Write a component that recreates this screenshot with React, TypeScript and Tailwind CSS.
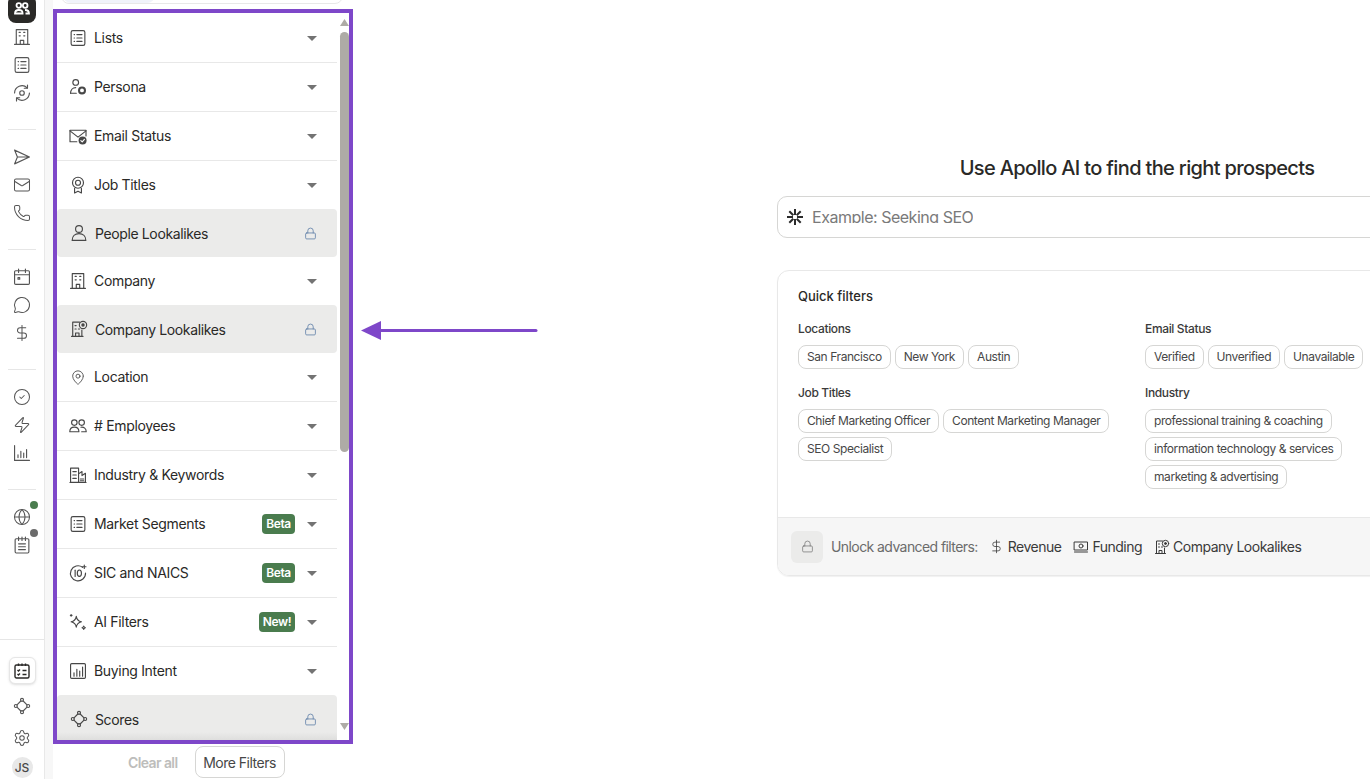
import { ReactNode } from "react";
import {
  CircleCheck,
  DollarSign,
  Globe,
  Lock,
  Mail,
  MapPin,
  MessageCircle,
  Phone,
  Settings,
  Zap,
} from "lucide-react";

function Ico({ size = 16, children }: { size?: number; children: ReactNode }) {
  return (
    <svg
      width={size}
      height={size}
      viewBox="1 1 14 14"
      fill="none"
      stroke="currentColor"
      strokeWidth="1"
      strokeLinecap="round"
      strokeLinejoin="round"
      className="shrink-0 overflow-visible"
    >
      {children}
    </svg>
  );
}

const ListIcon = ({ size = 16 }) => (
  <Ico size={size}>
    <rect x="2" y="1.5" width="12" height="13" rx="1.5" />
    <path d="M4.600 5h.4M4.600 8h.4M4.600 11h.4M7 5h4.500M7 8h4.500M7 11h4.500" />
  </Ico>
);
const BuildingIcon = ({ size = 16 }) => (
  <Ico size={size}>
    <path d="M3 14.500V1.500h10v13M1.500 14.500h13" />
    <path d="M6.500 14.500v-3.500h3v3.500M5.500 4h1M9.500 4h1M5.500 7h1M9.500 7h1" />
  </Ico>
);
const PersonaIcon = () => (
  <Ico>
    <circle cx="6" cy="4" r="2.500" />
    <path d="M1.500 13.500c0-3 2-5 4.500-5" />
    <path d="M1.500 13.500h5" />
    <circle cx="11.500" cy="11" r="2.600" strokeWidth="1.800" />
  </Ico>
);
const MailCheckIcon = () => (
  <Ico>
    <path d="M7 13H1V3h14v5" />
    <path d="M1 3.500l7 5.500 7-5.500" />
    <circle cx="12" cy="12" r="3.500" fill="currentColor" stroke="none" />
    <path d="M10.500 12l1.200 1.100 1.900-2.100" stroke="#fff" />
  </Ico>
);
const AwardIcon = () => (
  <Ico>
    <circle cx="8" cy="6" r="4.800" />
    <circle cx="8" cy="6" r="2.200" />
    <path d="M5 11v4l3-1.600 3 1.600v-4" />
  </Ico>
);
const PersonIcon = () => (
  <Ico>
    <circle cx="8" cy="4.500" r="3" />
    <path d="M2 14.500c0-3.800 2.500-6 6-6s6 2.200 6 6z" />
  </Ico>
);
const CompanyLookIcon = ({ size = 16 }) => (
  <Ico size={size}>
    <path d="M2.500 14.500V2h6M1.500 14.500h10M10.500 14.500V9" />
    <path d="M5 14.500V11.500h3v3M4.500 5h1M4.500 8h1M7.500 8h1" />
    <circle cx="11.500" cy="4.500" r="3.200" />
    <circle cx="11.500" cy="4.500" r="1" fill="currentColor" />
  </Ico>
);
const UsersIcon = ({ size = 16 }) => (
  <Ico size={size}>
    <circle cx="4.800" cy="5" r="2.400" />
    <circle cx="11.200" cy="5" r="2.400" />
    <path d="M.8 13c0-2.600 1.600-4 4-4s4 1.400 4 4zM10.500 9.100c2.800-.4 4.700 1.200 4.700 3.900h-4" />
  </Ico>
);
const IndustryIcon = () => (
  <Ico>
    <path d="M1.500 14.500V2h7v12.500M1 14.500h14M8.500 7l3-2v3.500l3-2V14.500" />
    <path d="M3.500 5h3M3.500 8h3M3.500 11h3M10 11.500h3M10 13h3" />
  </Ico>
);
const SicIcon = () => (
  <Ico>
    <path d="M12 3A6.600 6.600 0 1 0 14.600 8" />
    <path d="M5.500 5.500v5.500" />
    <ellipse cx="9.200" cy="8.200" rx="1.800" ry="2.800" />
    <path d="M13.500 1v3M12 2.500h3" />
  </Ico>
);
const SparkIcon = () => (
  <Ico>
    <path d="M6.500 3C7 6 8 7.200 11 7.800 8 8.500 7 9.500 6.500 12.500 6 9.500 5 8.500 2 7.800 5 7.200 6 6 6.500 3z" />
    <path d="M13 11.500c.2 1 .6 1.300 1.500 1.500-.9.200-1.300.6-1.500 1.500-.2-.9-.6-1.300-1.500-1.500.9-.2 1.300-.5 1.500-1.500z" />
    <path d="M2 1.500v1.500M1.300 2.200h1.500" />
  </Ico>
);
const BarsBoxIcon = () => (
  <Ico>
    <rect x="1.500" y="1.500" width="13" height="13" rx="1" />
    <path d="M4.500 12.500V9.500M7 12.500V6.500M9.500 12.500V8M12 12.500V4.500" />
  </Ico>
);
const ScoresIcon = ({ size = 16 }) => (
  <Ico size={size}>
    <circle cx="8" cy="2.600" r="1.300" />
    <circle cx="13.400" cy="8" r="1.300" />
    <circle cx="8" cy="13.400" r="1.300" />
    <circle cx="2.600" cy="8" r="1.300" />
    <path d="M9 3.600l3.400 3.400M12.400 9L9 12.400M7 12.400L3.600 9M3.600 7L7 3.600" />
  </Ico>
);
const SyncIcon = () => (
  <Ico>
    <path d="M1.500 8a6.500 6.500 0 0 1 11-4.500M14.500 8a6.500 6.500 0 0 1-11 4.500" />
    <path d="M12.800 1v2.800H10M3.200 15v-2.800H6" />
    <circle cx="8" cy="8" r="2" />
  </Ico>
);
const SendIcon = () => (
  <Ico>
    <path d="M1.500 2l13 6-13 6 2.500-6zM4 8h10.500" />
  </Ico>
);
const CalendarIcon = () => (
  <Ico>
    <rect x="1.500" y="2.500" width="13" height="12" rx="1" />
    <path d="M1.500 6h13M5 1v3M11 1v3" />
    <rect x="4.500" y="8.500" width="1.500" height="1.500" />
  </Ico>
);
const ChartIcon = () => (
  <Ico>
    <path d="M1.500 1.500v13h13" />
    <path d="M4.500 12V9.500M7 12V6.500M9.500 12V8M12 12V5" />
  </Ico>
);
const NotesIcon = () => (
  <Ico>
    <rect x="2" y="2.500" width="12" height="12.500" rx="1" />
    <path d="M5 1v3M8 1v3M11 1v3M5 7h6M5 9.500h6M5 12h6" />
  </Ico>
);
const ActiveUsersIcon = () => (
  <svg width="16" height="16" viewBox="0 0 16 16" fill="none" stroke="#fff" strokeWidth="1.800">
    <circle cx="4.800" cy="4.500" r="2.300" />
    <circle cx="11.200" cy="4.500" r="2.300" />
    <path d="M1 12.500c0-2.600 1.400-3.500 3.800-3.500s3.800.9 3.800 3.500zM11 9c2.600 0 4 1 4 3.500h-3.500" />
  </svg>
);
const ApolloMark = () => (
  <svg width="18" height="18" viewBox="0 0 18 18" fill="none" stroke="#2b2b2b" strokeWidth="2">
    <path d="M9 1v6M9 11v6M1 9h6M11 9h6M3.300 3.300l4 4M10.700 10.700l4 4M14.700 3.300l-4 4M7.300 10.700l-4 4" />
  </svg>
);

function RailButton({ children }: { children: ReactNode }) {
  return (
    <div className="flex h-7 w-7 items-center justify-center text-[#555555]">
      {children}
    </div>
  );
}

const lucideProps = { size: 18, strokeWidth: 1.35 };

function RailGroup({ children }: { children: ReactNode }) {
  return (
    <div className="flex flex-col items-center border-b border-[#e6e6e6] pt-[13px] pb-[22px] mx-2">
      {children}
    </div>
  );
}

function Rail() {
  return (
    <div className="flex h-[779px] w-[45px] shrink-0 flex-col border-r border-[#e8e8e8] bg-white">
      <div className="flex flex-col items-center mx-2 border-b border-[#e6e6e6] pb-[22px] -mt-[5px]">
        <div className="flex h-7 w-7 items-center justify-center rounded-lg bg-[#2a2927]">
          <ActiveUsersIcon />
        </div>
        <RailButton><BuildingIcon /></RailButton>
        <RailButton><ListIcon /></RailButton>
        <RailButton><SyncIcon /></RailButton>
      </div>
      <RailGroup>
        <RailButton><SendIcon /></RailButton>
        <RailButton><Mail {...lucideProps} /></RailButton>
        <RailButton><Phone {...lucideProps} /></RailButton>
      </RailGroup>
      <RailGroup>
        <RailButton><CalendarIcon /></RailButton>
        <RailButton><MessageCircle {...lucideProps} /></RailButton>
        <RailButton><DollarSign {...lucideProps} /></RailButton>
      </RailGroup>
      <RailGroup>
        <RailButton><CircleCheck {...lucideProps} /></RailButton>
        <RailButton><Zap {...lucideProps} /></RailButton>
        <RailButton><ChartIcon /></RailButton>
      </RailGroup>
      <div className="flex flex-col items-center pt-[13px]">
        <div className="relative">
          <RailButton><Globe {...lucideProps} /></RailButton>
          <span className="absolute -top-[2px] right-[-2px] h-2 w-2 rounded-full bg-[#4a7c4e]" />
        </div>
        <div className="relative">
          <RailButton><NotesIcon /></RailButton>
          <span className="absolute -top-[2px] right-[-2px] h-2 w-2 rounded-full bg-[#6b6b6b]" />
        </div>
      </div>
      <div className="mt-auto flex flex-col items-center border-t border-[#e6e6e6] pt-[17px]">
        <div className="flex h-[27px] w-[27px] items-center justify-center rounded-md border border-[#e6e6e6] bg-white text-[#2a2927] shadow-sm">
          <svg width="16" height="16" viewBox="0 0 16 16" fill="none" stroke="currentColor" strokeWidth="1.400">
            <rect x="1" y="2" width="14" height="13" rx="1.500" />
            <path d="M4.500 .5v2.500M8 .5v2.500M11.500 .5v2.500M3.500 7l1 1 1.500-1.500M3.500 11l1 1 1.500-1.500M8.500 7.500h4M8.500 11.500h4" />
          </svg>
        </div>
        <div className="mt-2"><RailButton><ScoresIcon /></RailButton></div>
        <div className="mt-1"><RailButton><Settings {...lucideProps} /></RailButton></div>
        <div className="mt-[5px] mb-px flex h-[21px] w-[21px] items-center justify-center rounded-full bg-[#e8e8e8] text-[12px] font-medium tracking-normal text-[#474747]">
          JS
        </div>
      </div>
    </div>
  );
}

type RowData = {
  label: string;
  icon: ReactNode;
  locked?: boolean;
  badge?: string;
  noBorder?: boolean;
};

const rows: RowData[] = [
  { label: "Lists", icon: <ListIcon /> },
  { label: "Persona", icon: <PersonaIcon /> },
  { label: "Email Status", icon: <MailCheckIcon /> },
  { label: "Job Titles", icon: <AwardIcon />, noBorder: true },
  { label: "People Lookalikes", icon: <PersonIcon />, locked: true },
  { label: "Company", icon: <BuildingIcon />, noBorder: true },
  { label: "Company Lookalikes", icon: <CompanyLookIcon />, locked: true },
  { label: "Location", icon: <MapPin size={17} strokeWidth={1.3} /> },
  { label: "# Employees", icon: <UsersIcon /> },
  { label: "Industry & Keywords", icon: <IndustryIcon /> },
  { label: "Market Segments", icon: <ListIcon />, badge: "Beta" },
  { label: "SIC and NAICS", icon: <SicIcon />, badge: "Beta" },
  { label: "AI Filters", icon: <SparkIcon />, badge: "New!" },
  { label: "Buying Intent", icon: <BarsBoxIcon />, noBorder: true },
  { label: "Scores", icon: <ScoresIcon />, locked: true },
];

function FilterRow({ row }: { row: RowData }) {
  if (row.locked) {
    return (
      <div className="flex h-12 shrink-0 items-center rounded bg-[#ebebea] pl-[14px] pr-5 text-[#474747]">
        <span className="flex w-4 shrink-0 justify-center">{row.icon}</span>
        <span className="ml-2 pt-px text-[14px] tracking-[-0.38px] text-[#2a2927]">{row.label}</span>
        <Lock size={13} strokeWidth={1.5} className="ml-auto text-[#5f7fa8]" />
      </div>
    );
  }
  return (
    <div
      className={`flex h-12 box-content shrink-0 items-center pl-[13px] pr-5 text-[#474747] ${
        row.noBorder ? "" : "border-b border-[#e8e8e8]"
      }`}
    >
      <span className="flex w-4 shrink-0 justify-center">{row.icon}</span>
      <span className="ml-2 pb-px text-[14px] tracking-[-0.33px] text-[#2a2927]">{row.label}</span>
      {row.badge && (
        <span
          className={`ml-auto mr-3 flex h-5 items-center justify-center rounded-sm bg-[#4a7c4e] text-[12px] font-semibold text-white ${
            row.badge === "Beta" ? "w-[33px]" : "w-9"
          }`}
        >
          {row.badge}
        </span>
      )}
      <svg width="10" height="5" viewBox="0 0 10 5" className={row.badge ? "" : "ml-auto"}>
        <path d="M0 0h10L5 5z" fill="#737373" />
      </svg>
    </div>
  );
}

function FilterPanel() {
  return (
    <div className="flex h-[779px] w-[300px] shrink-0 flex-col bg-white">
      <div className="h-[9px] overflow-hidden">
        <div className="ml-2 -mt-6 h-[28px] w-[282px] rounded-lg border border-[#e8e8e8]">
          <div className="ml-px h-full w-[92px] rounded-lg bg-[#f0f3fa]" />
        </div>
      </div>
      <div className="relative flex h-[735px] shrink-0 overflow-hidden border-4 border-[#7e47c9]">
        <div className="flex w-[280px] shrink-0 flex-col pt-px">
          {rows.map((row) => (
            <FilterRow key={row.label} row={row} />
          ))}
        </div>
        <div className="absolute bottom-0 left-0 h-2 w-[280px] bg-gradient-to-b from-transparent to-[#d9d9d8]/70" />
        <div className="ml-[3px] flex w-[9px] shrink-0 flex-col items-center pt-[6px]">
          <svg width="9" height="7" viewBox="0 0 9 7"><path d="M4.500 0L9 7H0z" fill="#aeaba6" /></svg>
          <div className="mt-[6px] h-[420px] w-[9px] shrink-0 rounded-full bg-[#aeaba6]" />
          <svg width="9" height="7" viewBox="0 0 9 7" className="mt-auto mb-[10px]"><path d="M0 0h9L4.500 7z" fill="#aeaba6" /></svg>
        </div>
      </div>
      <div className="flex flex-1 items-center gap-[17px] pl-[75px] pt-[1px]">
        <span className="text-[14px] font-semibold tracking-[-0.6px] text-[#bdbdbb]">Clear all</span>
        <button className="h-[32px] w-[90px] rounded-lg border border-[#d6d6d4] text-[14px] tracking-[-0.5px] text-[#474747]">
          More Filters
        </button>
      </div>
    </div>
  );
}

function Chip({ children }: { children: ReactNode }) {
  return (
    <span className="flex h-6 items-center rounded-lg border border-[#d6d6d4] px-2 text-[12px] tracking-[-0.42px] text-[#474747]">
      {children}
    </span>
  );
}

function ChipGroup({ title, chips }: { title: string; chips: string[] }) {
  return (
    <div className="w-[327px]">
      <div className="text-[12px] leading-4 font-medium tracking-[-0.36px] text-[#3a3a3a]">{title}</div>
      <div className="mt-[8px] flex flex-wrap gap-1">
        {chips.map((chip) => (
          <Chip key={chip}>{chip}</Chip>
        ))}
      </div>
    </div>
  );
}

function UnlockItem({ icon, label }: { icon: ReactNode; label: string }) {
  return (
    <span className="flex items-center gap-1 text-[14px] tracking-[-0.5px] text-[#3a3a3a]">
      {icon}
      {label}
    </span>
  );
}

function MainArea() {
  return (
    <div className="ml-[424px] w-[720px] shrink-0 pt-[156px]">
      <h1 className="text-center text-[20px] leading-6 font-medium tracking-[-0.65px] text-[#2a2927]">
        Use Apollo AI to find the right prospects
      </h1>
      <div className="mt-[16px] flex h-[42px] items-center gap-2 rounded-[10px] border border-[#d6d6d4] pl-2">
        <ApolloMark />
        <span className="mb-[3px] h-[15px] overflow-hidden text-[16px] leading-[18px] tracking-[-0.48px] text-[#7a7a7a]">
          Example: Seeking SEO
        </span>
      </div>
      <div className="mt-8 h-[306px] overflow-hidden rounded-xl border border-[#e8e8e8] shadow-[0_1px_1px_rgba(0,0,0,0.06)]">
        <div className="h-[246px] px-5 pt-[16px]">
          <div className="text-[13px] leading-[18px] font-medium tracking-normal text-[#2a2927]">Quick filters</div>
          <div className="mt-4 flex gap-5">
            <div className="flex flex-col gap-4">
              <ChipGroup title="Locations" chips={["San Francisco", "New York", "Austin"]} />
              <ChipGroup
                title="Job Titles"
                chips={["Chief Marketing Officer", "Content Marketing Manager", "SEO Specialist"]}
              />
            </div>
            <div className="flex flex-col gap-4">
              <ChipGroup title="Email Status" chips={["Verified", "Unverified", "Unavailable"]} />
              <ChipGroup
                title="Industry"
                chips={[
                  "professional training & coaching",
                  "information technology & services",
                  "marketing & advertising",
                ]}
              />
            </div>
          </div>
        </div>
        <div className="flex h-[58px] items-center border-t border-[#e8e8e8] bg-[#f6f6f6] pl-[13px]">
          <div className="flex h-8 w-8 items-center justify-center rounded-md bg-[#ebebea] text-[#6b6b6b]">
            <Lock size={13} strokeWidth={1.25} />
          </div>
          <span className="ml-2 text-[14px] tracking-[-0.58px] text-[#6b6b6b]">Unlock advanced filters:</span>
          <div className="ml-[11px] flex items-center gap-[13px]">
            <UnlockItem icon={<DollarSign size={15} strokeWidth={1.25} />} label="Revenue" />
            <UnlockItem
              icon={
                <Ico size={14}>
                  <rect x="1.500" y="3" width="13" height="8" />
                  <circle cx="8" cy="7" r="2" />
                  <path d="M1.500 13h13" />
                </Ico>
              }
              label="Funding"
            />
            <UnlockItem icon={<CompanyLookIcon size={14} />} label="Company Lookalikes" />
          </div>
        </div>
      </div>
    </div>
  );
}

export default function App() {
  return (
    <div className="relative flex h-[779px] w-[1370px] overflow-hidden bg-white font-['Inter',sans-serif] tracking-[-0.42px]">
      <Rail />
      <div className="w-2 shrink-0 bg-[#f7f7f7]" />
      <FilterPanel />
      <MainArea />
      {/* annotation arrow */}
      <svg
        width="178"
        height="20"
        viewBox="0 0 178 20"
        className="absolute left-[361px] top-[321px]"
      >
        <path d="M0 9.500L20 0v19z" fill="#7e47c9" />
        <path d="M18 9.500h157" stroke="#7e47c9" strokeWidth="3" strokeLinecap="round" />
      </svg>
    </div>
  );
}
